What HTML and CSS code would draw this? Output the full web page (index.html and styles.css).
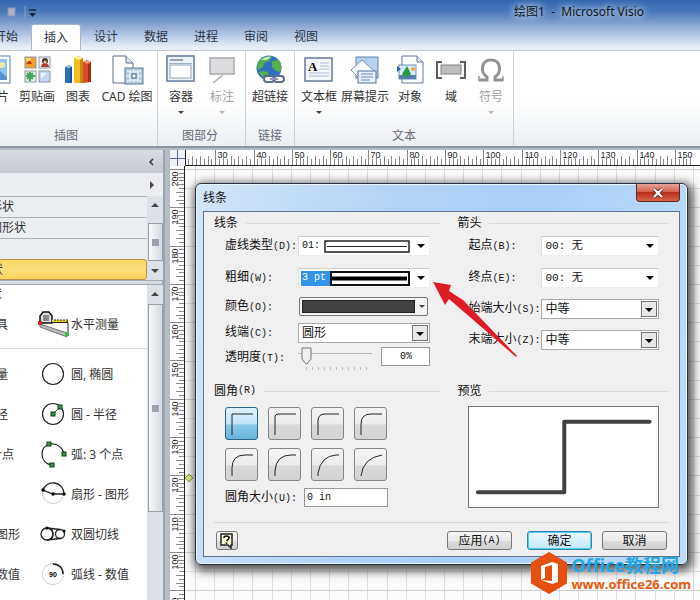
FILE: index.html
```html
<!DOCTYPE html>
<html lang="zh-CN">
<head>
  <meta charset="UTF-8">
  <meta name="viewport" content="width=device-width, initial-scale=1.0">
  <title>绘图1 - Microsoft Visio</title>
  <link rel="stylesheet" href="styles.css">
</head>
<body>
  <header class="topbar">
    <div class="titlebar">
      <svg class="quick" width="40" height="20" viewBox="0 0 40 20">
        <path d="M8 6h7v8H8z" fill="#a8b4c6" stroke="#8492a8"/>
        <path d="M25 4v13" stroke="#8da3c4"/>
        <path d="M29 8h7" stroke="#1d2733" stroke-width="1.5"/>
        <path d="M29 11h7l-3.500 4z" fill="#1d2733"/>
      </svg>
      <span class="title">绘图1&nbsp; -&nbsp; Microsoft Visio</span>
    </div>
    <nav class="tabs">
      <button class="tab">开始</button>
      <button class="tab active">插入</button>
      <button class="tab">设计</button>
      <button class="tab">数据</button>
      <button class="tab">进程</button>
      <button class="tab">审阅</button>
      <button class="tab">视图</button>
    </nav>
  </header>

  <section class="ribbon">
    <div class="group group-pics">
      <div class="tools">
        <button class="tool tool-pic">
          <svg width="30" height="30" viewBox="0 0 30 30"><rect x="1" y="1" width="27" height="27" fill="#fff" stroke="#5f7fa5"/><rect x="4" y="4" width="21" height="21" fill="#8fc3ee"/><circle cx="20" cy="10" r="3" fill="#f2e6b0"/><path d="M4 25l10-12 11 9v3z" fill="#4f8fd0"/></svg>
          <span>片</span>
        </button>
        <button class="tool">
          <svg width="30" height="30" viewBox="0 0 30 30"><rect x="3" y="2" width="11" height="11" fill="#f6a02a" stroke="#8a95a8"/><path d="M4 9l6 0-2-4z" fill="#c8371c"/><path d="M4 3h5v3H4z" fill="#ffd668"/><rect x="17" y="2" width="11" height="11" fill="#f5f1ee" stroke="#8a95a8"/><circle cx="23" cy="6" r="3" fill="#553126"/><path d="M19 12c0-5 8-5 8 0z" fill="#b33a2e"/><circle cx="23" cy="7" r="1.500" fill="#f3c9a6"/><rect x="3" y="16" width="11" height="11" fill="#e6f3e0" stroke="#8a95a8"/><path d="M8 17v9M4 21h9M5 18l6 6M11 18l-6 6" stroke="#45a45a" stroke-width="2"/><rect x="17" y="16" width="11" height="11" fill="#c8d3fa" stroke="#8a95a8"/><path d="M19 18h5l-5 6z" fill="#f3f6ff"/></svg>
          <span>剪贴画</span>
        </button>
        <button class="tool tool-chart">
          <svg width="30" height="30" viewBox="0 0 30 30"><path d="M2 12l4-2 3 2v16H2z" fill="#2d6fb5"/><path d="M2 12l4-2 3 2-3 1z" fill="#8ec4f0"/><path d="M7 13l2-1v16l-2-1z" fill="#1f4f89"/><path d="M11 3l4-2 5 2v25h-9z" fill="#f0bd24"/><path d="M11 3l4-2 5 2-4 2z" fill="#fff08a"/><path d="M17 5l3-2v25h-3z" fill="#c78a0a"/><path d="M20 7l4-2 4 2v20l-8 1z" fill="#d84a2a"/><path d="M20 7l4-2 4 2-3 2z" fill="#f59a7c"/><path d="M25 9l3-2v20h-3z" fill="#a32b17"/></svg>
          <span>图表</span>
        </button>
        <button class="tool tool-cad">
          <svg width="34" height="30" viewBox="0 0 34 30"><path d="M3 1h13l7 7v20H3z" fill="#fff" stroke="#5c6c82"/><path d="M16 1v7h7" fill="#dce6f2" stroke="#5c6c82"/><rect x="15" y="13" width="18" height="16" fill="#b5cbe0" stroke="#5f7b99"/><path d="M24 14v14M16 21h16M17 16h4M27 16h4M17 26h4M27 26h4" stroke="#f3f8fc" fill="none"/><rect x="20" y="17" width="8" height="8" fill="#a4bdd6" stroke="#fff"/><rect x="22" y="19" width="4" height="4" fill="#eaf2fa" stroke="#55708e"/></svg>
          <span>CAD 绘图</span>
        </button>
      </div>
      <div class="group-name">插图</div>
    </div>
    <div class="group group-parts">
      <div class="tools">
        <button class="tool tool-wide">
          <svg width="30" height="30" viewBox="0 0 30 30"><rect x="1" y="1" width="27" height="25" fill="#eef3f9" stroke="#62799c" stroke-width="1.500"/><path d="M4 5h13" stroke="#3b5273"/><path d="M3 8.500h23" stroke="#9cb0ca"/><rect x="4" y="10" width="21" height="13" fill="#fff" stroke="#8fa5c2"/></svg>
          <span>容器</span><i class="caret"></i>
        </button>
        <button class="tool tool-slim" disabled>
          <svg width="30" height="30" viewBox="0 0 30 30"><rect x="3" y="3" width="24" height="16" fill="#dcdcde" stroke="#aaa8ae" stroke-width="1.500"/><path d="M16 20L6 28" stroke="#b9a9b2" stroke-width="1.500"/></svg>
          <span>标注</span><i class="caret"></i>
        </button>
      </div>
      <div class="group-name">图部分</div>
    </div>
    <div class="group group-link">
      <div class="tools">
        <button class="tool tool-link">
          <svg width="32" height="30" viewBox="0 0 32 30"><circle cx="15" cy="13" r="12.500" fill="#2e71bf"/><path d="M4 8C8 1 15 0 18 2l-3 4-5 2-1 4-5 3-1-4zM18 6l7-1c3 4 3 8 1 12l-4-1-4-4zM8 16l6 1 1 6-4 1c-3-2-5-5-6-7z" fill="#55b04b"/><path d="M7 5c3-3 8-4 10-3l-4 3z" fill="#c5ebc0"/><rect x="10" y="21" width="10" height="6" rx="3" fill="#fff" stroke="#596b92" stroke-width="2"/><rect x="20" y="21" width="10" height="6" rx="3" fill="#fff" stroke="#596b92" stroke-width="2"/><path d="M16 24h8" stroke="#8796b8" stroke-width="2"/></svg>
          <span>超链接</span>
        </button>
      </div>
      <div class="group-name">链接</div>
    </div>
    <div class="group group-text">
      <div class="tools">
        <button class="tool tool-text">
          <svg width="30" height="30" viewBox="0 0 30 30"><rect x="1" y="3" width="27" height="23" fill="#f3f7fc" stroke="#637a9c" stroke-width="1.500"/><text x="4" y="16" class="glyph-a">A</text><path d="M16 8h9M16 11h9M16 14h9M5 18h20M5 21h20" stroke="#a9b9d6"/></svg>
          <span>文本框</span><i class="caret"></i>
        </button>
        <button class="tool tool-text">
          <svg width="30" height="30" viewBox="0 0 30 30"><rect x="6" y="2" width="22" height="21" fill="#b7cff0" stroke="#6482ae"/><path d="M1 15L12 5l12 11-12 10z" fill="#f8fbff" stroke="#8396b4"/><rect x="8" y="16" width="18" height="12" fill="#e8effa" stroke="#5472a1"/><path d="M11 19h12M11 22h12M11 25h9" stroke="#6c8fc5"/></svg>
          <span>屏幕提示</span>
        </button>
        <button class="tool tool-wide">
          <svg width="30" height="30" viewBox="0 0 30 30"><path d="M7 1h15l6 6v21H7z" fill="#fff" stroke="#62799c"/><path d="M22 1v6h6" fill="#dbe6f4" stroke="#62799c"/><rect x="4" y="10" width="17" height="14" fill="#d6edfb" stroke="#6e8eb3"/><circle cx="18" cy="14" r="2" fill="#f2a43a"/><path d="M4 20h17v4H4z" fill="#557db3"/><path d="M12 11l4 8-3 3h-3l-3-3z" fill="#2f9444"/><path d="M2 11l4 3-4 3z" fill="#2a62a5"/></svg>
          <span>对象</span>
        </button>
        <button class="tool tool-slim">
          <svg width="30" height="30" viewBox="0 0 30 30"><path d="M6 7H1v16h5M24 7h5v16h-5" fill="none" stroke="#5d5d5d" stroke-width="2"/><rect x="5" y="10" width="20" height="9" fill="#bdbdbd" stroke="#828282"/></svg>
          <span>域</span>
        </button>
        <button class="tool tool-chart" disabled>
          <svg width="30" height="30" viewBox="0 0 30 30"><path d="M3 25h8v-3C4 17 5 5 15 5s11 12 4 17v3h8" fill="none" stroke="#929292" stroke-width="3"/><path d="M3 21v5M27 21v5" stroke="#929292" stroke-width="1.500"/></svg>
          <span>符号</span><i class="caret"></i>
        </button>
      </div>
      <div class="group-name">文本</div>
    </div>
  </section>

  <main class="workspace">
    <aside class="shapes">
      <div class="shapes-head"><button class="collapse" aria-label="折叠"><svg width="8" height="10" viewBox="0 0 8 10"><path d="M6 2L3 5l3 3" fill="none" stroke="#333" stroke-width="1.500"/></svg></button></div>
      <div class="more"><svg width="6" height="10" viewBox="0 0 6 10"><path d="M1 1l4 4-4 4z" fill="#444"/></svg></div>
      <div class="scroller">
        <div class="stencils">
          <button class="stencil">形状</button>
          <button class="stencil">图形状</button>
          <button class="stencil"></button>
          <button class="stencil selected">状</button>
        </div>
        <div class="bar">
          <svg width="10" height="8" viewBox="0 0 10 8"><path d="M5 2l4 4H1z" fill="#444"/></svg>
          <div class="thumb thumb-top"></div>
          <svg width="10" height="8" viewBox="0 0 10 8"><path d="M5 6l4-4H1z" fill="#444"/></svg>
        </div>
      </div>
      <div class="splitter"></div>
      <div class="scroller scroller-list">
        <div class="masters">
          <div class="masters-name">状</div>
          <div class="master first">
            <span class="cut">具</span>
            <svg width="34" height="30" viewBox="0 0 34 30"><path d="M3 13V6l3-4h6l3 4v7z" fill="#ddd" stroke="#111" stroke-width="1.500"/><path d="M6 6h6M6 8h6M6 10h6" stroke="#333"/><path d="M15 10h16v2H15z" fill="#e7d52c"/><path d="M15 12.500h16M18 9v2M21 9v2M24 9v2M27 9v2M30 9v3" stroke="#222"/><path d="M3 14l27 9v4L3 17z" fill="#bbb" stroke="#777"/><path d="M31 13v13" stroke="#222"/><rect x="1" y="11" width="4" height="4" fill="#d3262c"/><rect x="28" y="22" width="4" height="4" fill="#2fc251"/></svg>
            <span>水平测量</span>
          </div>
          <div class="master">
            <span class="cut">量</span>
            <svg width="34" height="30" viewBox="0 0 34 30"><circle cx="16" cy="14" r="10.500" fill="none" stroke="#222" stroke-width="1.200"/></svg>
            <span>圆, 椭圆</span>
          </div>
          <div class="master">
            <span class="cut">径</span>
            <svg width="34" height="30" viewBox="0 0 34 30"><circle cx="16" cy="14" r="10.500" fill="none" stroke="#222" stroke-width="1.200"/><path d="M16 14l7-7" stroke="#333"/><g fill="#3b9b45" stroke="#123c16"><rect x="14" y="12" width="4" height="4"/><rect x="21" y="5" width="4" height="4"/></g></svg>
            <span>圆 - 半径</span>
          </div>
          <div class="master">
            <span class="cut cut-long">个点</span>
            <svg width="34" height="30" viewBox="0 0 34 30"><path d="M15 25C8 24 5 19 5 14S8 5 14 4s12 4 13 10" fill="none" stroke="#222" stroke-width="1.200"/><g fill="#3b9b45" stroke="#123c16"><rect x="10" y="2" width="4" height="4"/><rect x="25" y="12" width="4" height="4"/><rect x="13" y="23" width="4" height="4"/></g></svg>
            <span>弧: 3 个点</span>
          </div>
          <div class="master">
            <span class="cut"></span>
            <svg width="34" height="30" viewBox="0 0 34 30"><circle cx="16" cy="13" r="10.500" fill="none" stroke="#999" stroke-dasharray="1 1"/><path d="M6 10c3-10 20-10 21 4H16z" fill="none" stroke="#222" stroke-width="1.300"/><circle cx="6" cy="10" r="1.700"/><circle cx="16" cy="14" r="1.700"/><circle cx="27" cy="14" r="1.700"/></svg>
            <span>扇形 - 图形</span>
          </div>
          <div class="master">
            <span class="cut">图形</span>
            <svg width="34" height="30" viewBox="0 0 34 30"><g fill="none" stroke="#222" stroke-width="1.300"><circle cx="10" cy="14" r="6"/><circle cx="23" cy="14" r="4.500"/><path d="M10 8l13 1.500M10 20l13-1.500M10 8c8 1 8 11 0 12"/></g><circle cx="10" cy="8" r="1.500"/><circle cx="27" cy="11" r="1.500"/></svg>
            <span>双圆切线</span>
          </div>
          <div class="master">
            <span class="cut">数值</span>
            <svg width="34" height="30" viewBox="0 0 34 30"><circle cx="16" cy="14" r="10.500" fill="none" stroke="#999" stroke-dasharray="1 1"/><path d="M16 4c6 0 10 4 10 10" fill="none" stroke="#222" stroke-width="1.500"/><text x="12" y="17" class="glyph-deg">90</text></svg>
            <span>弧线 - 数值</span>
          </div>
        </div>
        <div class="bar">
          <svg width="10" height="8" viewBox="0 0 10 8"><path d="M5 2l4 4H1z" fill="#444"/></svg>
          <div class="thumb thumb-list"></div>
        </div>
      </div>
    </aside>

    <section class="page">
      <div class="corner"></div>
      <svg class="ruler-x" id="ruler-x"></svg>
      <svg class="ruler-y" id="ruler-y"></svg>
      <svg class="sheet" id="sheet"></svg>
    </section>
  </main>

  <form class="dialog" onsubmit="return false">
    <div class="dialog-title">
      <h1>线条</h1>
      <button class="close" type="button" aria-label="关闭"><svg width="12" height="10" viewBox="0 0 12 10"><path d="M2 1l8 8M10 1L2 9" stroke="#6b2a24" stroke-width="4"/><path d="M2 1l8 8M10 1L2 9" stroke="#fff" stroke-width="2.200"/></svg></button>
    </div>
    <div class="dialog-body">
      <div class="columns">
        <section>
          <h2>线条</h2>
          <div class="fields fields-line">
            <label for="dash">虚线类型<span class="key">(D):</span></label>
            <div class="combo flat">
              <select id="dash"><option>01:</option></select>
              <svg width="86" height="13" viewBox="0 0 86 13"><rect x="1" y="1" width="84" height="11" fill="#fff" stroke="#222" stroke-width="1.500"/><path d="M3 6.500h80" stroke="#222"/></svg>
            </div>
            <label for="weight">粗细<span class="key">(W):</span></label>
            <div class="combo flat weight">
              <select id="weight"><option>3 pt</option></select>
              <svg width="80" height="15" viewBox="0 0 80 15"><rect x="1" y="1" width="78" height="13" fill="#fff" stroke="#111" stroke-width="2"/><path d="M2 7.500h75" stroke="#000" stroke-width="4"/></svg>
            </div>
            <label for="color">颜色<span class="key">(O):</span></label>
            <button class="color" id="color" type="button"><span class="swatch"></span><i class="caret"></i></button>
            <label for="cap">线端<span class="key">(C):</span></label>
            <div class="combo"><select id="cap"><option>圆形</option></select></div>
            <label for="alpha">透明度<span class="key">(T):</span></label>
            <div class="slider">
              <div class="track"><input id="alpha" type="range" min="0" max="100" value="0"><div class="marks"></div></div>
              <input class="percent" type="text" value="0%" aria-label="透明度">
            </div>
          </div>
        </section>
        <section>
          <h2>箭头</h2>
          <div class="fields fields-arrow">
            <label for="begin">起点<span class="key">(B):</span></label>
            <div class="combo flat"><select id="begin"><option>00: 无</option></select></div>
            <label for="end">终点<span class="key">(E):</span></label>
            <div class="combo flat"><select id="end"><option>00: 无</option></select></div>
            <label for="begin-size">始端大小<span class="key">(S):</span></label>
            <div class="combo"><select id="begin-size"><option>中等</option></select></div>
            <label for="end-size">末端大小<span class="key">(Z):</span></label>
            <div class="combo"><select id="end-size"><option>中等</option></select></div>
          </div>
        </section>
        <section>
          <h2>圆角<span class="key">(R)</span></h2>
          <div class="rounds">
            <button class="round on" type="button" aria-label="圆角 1"><svg width="33" height="33" viewBox="0 0 33 33"><path d="M6 27V6h21"/></svg></button>
            <button class="round" type="button" aria-label="圆角 2"><svg width="33" height="33" viewBox="0 0 33 33"><path d="M6 27V9q0-3 3-3h18"/></svg></button>
            <button class="round" type="button" aria-label="圆角 3"><svg width="33" height="33" viewBox="0 0 33 33"><path d="M6 27V13q0-7 7-7h14"/></svg></button>
            <button class="round" type="button" aria-label="圆角 4"><svg width="33" height="33" viewBox="0 0 33 33"><path d="M6 27V16q0-10 10-10h11"/></svg></button>
            <button class="round" type="button" aria-label="圆角 5"><svg width="33" height="33" viewBox="0 0 33 33"><path d="M6 27v-8Q6 6 19 6h8"/></svg></button>
            <button class="round" type="button" aria-label="圆角 6"><svg width="33" height="33" viewBox="0 0 33 33"><path d="M6 27v-5Q7 6 22 6h5"/></svg></button>
            <button class="round" type="button" aria-label="圆角 7"><svg width="33" height="33" viewBox="0 0 33 33"><path d="M6 27v-3Q9 7 24 6h3"/></svg></button>
            <button class="round" type="button" aria-label="圆角 8"><svg width="33" height="33" viewBox="0 0 33 33"><path d="M6 27Q8 9 27 6"/></svg></button>
          </div>
          <div class="round-size">
            <label for="round-size">圆角大小<span class="key">(U):</span></label>
            <input id="round-size" type="text" value="0 in">
          </div>
        </section>
        <section class="preview-col">
          <h2>预览</h2>
          <svg class="preview" viewBox="0 0 190 101" preserveAspectRatio="none"><path d="M9 86h87V15h86" fill="none" stroke="#404040" stroke-width="4" stroke-linecap="round" stroke-linejoin="round"/></svg>
        </section>
      </div>
      <div class="actions">
        <button class="help" type="button" aria-label="帮助"><svg width="16" height="16" viewBox="0 0 16 16"><path d="M2 1h11v11h-1v3l-3-3H2z" fill="#ffffd8" stroke="#222" stroke-width="1.500"/><path d="M5 5q0-2 2.500-2T10 5q0 1-2.500 3M7.500 9.500v1.500" fill="none" stroke="#111" stroke-width="1.700"/></svg></button>
        <button type="button">应用<span class="key">(A)</span></button>
        <button class="ok" type="submit">确定</button>
        <button type="button">取消</button>
      </div>
    </div>
  </form>

  <svg class="pointer" width="90" height="82" viewBox="0 0 90 82"><path d="M1 1l18 3-2 6 14 9 54 56-1 1L24 24l-7-6-4 6z" fill="#de1c24"/></svg>

  <div class="brand">
    <svg width="36" height="42" viewBox="0 0 36 42"><path d="M18 1l17 10v20L18 41 1 31V11z" fill="#e5500f" stroke="#e5500f" stroke-linejoin="round" stroke-width="2"/><path d="M10 14l11-4 6 2v18l-6 2-11-4 11 1V13l-7 2v11l-4 2z" fill="#fff"/></svg>
    <div>
      <div class="brand-name">Office教程网</div>
      <a class="brand-url" href="#">www.office26.com</a>
    </div>
  </div>

  <script>
const STEP = 38.3; // pixels per 10 units

function line(x1, y1, x2, y2, color) {
  return `<line x1="${x1}" y1="${y1}" x2="${x2}" y2="${y2}" stroke="${color}"/>`;
}

function drawRulerX() {
  let out = "";
  for (let i = 0; i < 135; i++) {
    const x = Math.round(-9 + i * STEP / 10) + 0.5;
    const top = i % 10 === 0 ? 0 : i % 2 === 0 ? 6 : 9;
    out += line(x, top, x, 15, "#888");
    if (i % 10 === 0 && i > 0) {
      out += `<text x="${x + 2}" y="8">${20 + i}</text>`;
    }
  }
  document.getElementById("ruler-x").innerHTML = out;
}

function drawRulerY() {
  let out = "";
  for (let i = 0; i < 120; i++) {
    const y = Math.round(3 + i * STEP / 10) + 0.5;
    const left = i % 10 === 0 ? 0 : i % 2 === 0 ? 6 : 9;
    out += line(left, y, 14, y, "#888");
    if (i % 10 === 0) {
      out += `<text transform="translate(8 ${y + 17}) rotate(-90)">${200 - i}</text>`;
    }
  }
  document.getElementById("ruler-y").innerHTML = out;
}

function drawSheet() {
  let out = "";
  for (let i = 0; i < 30; i++) {
    const x = Math.round(10 + i * STEP / 2) + 0.5;
    const y = Math.round(3 + i * STEP / 2) + 0.5;
    out += line(x, 0, x, 600, "#dcdde2");
    out += line(0, y, 700, y, i % 2 ? "#dcdde2" : "#cfd0d6");
  }
  out += `<path d="M4 308l4 4-4 4-4-4z" fill="#dde87a" stroke="#8d9a34"/>`;
  document.getElementById("sheet").innerHTML = out;
}

drawRulerX();
drawRulerY();
drawSheet();
  </script>
</body>
</html>
```

FILE: styles.css
```css
* {
  box-sizing: border-box;
}

body {
  margin: 0;
  height: 100vh;
  overflow: hidden;
  position: relative;
  display: flex;
  flex-direction: column;
  background: #b4bcc6;
  color: #333;
  font-family: "Noto Sans", "Noto Sans CJK SC", sans-serif;
  font-size: 12px;
  line-height: 14px;
}

button,
input,
select {
  font: inherit;
  color: inherit;
  margin: 0;
  padding: 0;
  border: none;
  background: none;
}

svg {
  display: block;
  flex: none;
}

/* title and tabs */
.topbar {
  background: linear-gradient(#3266ae, #4b7abb 12px, #9db7db 30px, #e4eaf4 46px, #edf1f7);
}

.titlebar {
  height: 24px;
  display: flex;
  align-items: center;
  justify-content: space-between;
  padding-right: 56px;
}

.title {
  color: #101820;
  text-shadow: 0 0 6px #d5e2f3, 0 0 10px #d5e2f3;
}

.tabs {
  display: flex;
  height: 26px;
  margin-left: -19px;
}

.tab {
  width: 50px;
  color: #2a3444;
}

.tab.active {
  background: #fff;
  border: 1px solid #a9b6c8;
  border-bottom: none;
  border-radius: 3px 3px 0 0;
}

/* ribbon */
.ribbon {
  display: flex;
  height: 98px;
  background: linear-gradient(#fff 50%, #eceff2);
  border-top: 1px solid #c3cad3;
  border-bottom: 2px solid #8d959f;
}

.group {
  display: flex;
  flex-direction: column;
  justify-content: space-between;
  padding: 4px 1px 3px;
  border-right: 1px solid #cdd1d6;
}

.group-pics {
  margin-left: -25px;
  padding-right: 2px;
  padding-left: 2px;
}

.group-parts {
  padding-right: 4px;
}

.tools {
  display: flex;
}

.tool {
  width: 40px;
  display: flex;
  flex-direction: column;
  align-items: center;
  gap: 5px;
  white-space: nowrap;
}

.tool-slim {
  width: 38px;
}

.tool-chart {
  width: 42px;
}

.tool-wide {
  width: 44px;
}

.tool-text,
.tool-link {
  width: 46px;
}

.tool-cad {
  width: 56px;
}

.tool-pic span {
  padding-left: 12px;
}

.tool:disabled {
  color: #a0a0a0;
}

.caret {
  border: 3px solid transparent;
  border-top-color: #444;
  border-bottom: none;
}

.tool:disabled .caret {
  border-top-color: #bbb;
}

.tool .caret {
  margin-top: 2px;
}

.group-name {
  text-align: center;
  color: #666d77;
}

.glyph-a {
  font: bold 13px "Liberation Serif", serif;
}

.glyph-deg {
  font: bold 7px "Liberation Sans", sans-serif;
}

/* shapes pane */
.workspace {
  flex: 1;
  min-height: 0;
  display: flex;
  padding-top: 2px;
}

.shapes {
  width: 185px;
  margin: 0 5px 0 -20px;
  display: flex;
  flex-direction: column;
  background: #ebedf1;
  border-right: 2px solid #9aa3ae;
}

.shapes-head,
.more {
  height: 23px;
  display: flex;
  align-items: center;
  justify-content: flex-end;
  padding-right: 8px;
}

.shapes-head {
  background: linear-gradient(#d9dce1, #c6cad0);
}

.scroller {
  display: flex;
}

.scroller-list {
  flex: 1;
  min-height: 0;
}

.stencils {
  flex: 1;
}

.stencil {
  display: block;
  width: 100%;
  height: 21px;
  padding-left: 10px;
  text-align: left;
  border-top: 1px solid #aab1bb;
}

.stencil.selected {
  background: linear-gradient(#fbd864, #fcdf7c 50%, #fbd25a);
  border: 1px solid #b8924a;
  border-radius: 3px;
}

.bar {
  width: 16px;
  display: flex;
  flex-direction: column;
  align-items: center;
  gap: 6px;
  padding: 5px 0;
  background: #dce1e7;
}

.thumb {
  width: 15px;
  background: linear-gradient(#9ba3ae, #9ba3ae) center / 7px 7px no-repeat, linear-gradient(90deg, #f7f8fa, #d5dae1);
  border: 1px solid #98a0ab;
}

.thumb-top {
  flex: 1;
  margin: 8px 0 0;
}

.thumb-list {
  height: 208px;
}

.splitter {
  height: 5px;
  background: #d6dbe2;
  border: 1px solid #a1a9b4;
}

.masters {
  flex: 1;
  padding-top: 2px;
  background: #fff;
  overflow: hidden;
}

.masters-name {
  padding-left: 10px;
}

.master {
  height: 40px;
  display: flex;
  align-items: center;
  white-space: nowrap;
}

.master.first {
  height: 48px;
  margin-bottom: 6px;
  border-bottom: 1px solid #ddd;
}

.cut {
  width: 57px;
  padding-left: 16px;
}

.cut-long {
  padding-left: 10px;
}

/* drawing page */
.page {
  flex: 1;
  min-width: 0;
  display: grid;
  grid-template-columns: 15px 1fr;
  grid-template-rows: 16px 1fr;
  background: #fff;
}

.corner {
  background: linear-gradient(#669, #669) center / 1px 100% no-repeat, linear-gradient(#669, #669) center / 100% 1px no-repeat, #eef1f8;
}

.ruler-x,
.ruler-y,
.sheet {
  width: 100%;
  height: 100%;
  overflow: hidden;
  font: 9px "Liberation Sans", sans-serif;
  fill: #222;
}

.ruler-x {
  border-bottom: 1px solid #222;
  border-left: 1px solid #222;
}

.ruler-y {
  border-right: 1px solid #222;
}

.sheet {
  background: #fbfbfc;
}

/* dialog */
.dialog {
  position: absolute;
  left: 195px;
  top: 183px;
  width: 493px;
  padding: 0 7px 7px;
  background: linear-gradient(100deg, #d4e5f7, #b3d4f8 35%, #a9cff8 60%, #bcdcfa);
  border: 1px solid #26313f;
  border-radius: 6px;
  box-shadow: inset 0 0 0 1px #e9f4ff, 2px 3px 10px 3px #555;
  color: #111;
}

.dialog-title {
  height: 27px;
  display: flex;
  justify-content: space-between;
}

.dialog h1 {
  margin: 7px 0 0;
  font-size: 12px;
  font-weight: normal;
}

.close {
  width: 44px;
  height: 18px;
  display: grid;
  place-items: center;
  background: linear-gradient(#e6a395, #d4634f 45%, #b92d1c 50%, #d9644c);
  border: 1px solid #5d2623;
  border-top: none;
  border-radius: 0 0 4px 4px;
}

.dialog-body {
  padding: 4px 10px 6px;
  background: #f0f0f0;
  border: 1px solid #5f738c;
}

.columns {
  display: grid;
  grid-template-columns: 227fr 212fr;
  column-gap: 17px;
  row-gap: 14px;
}

.dialog h2 {
  display: flex;
  align-items: center;
  height: 14px;
  margin: 0;
  font-size: 12px;
  font-weight: normal;
}

.dialog h2::after {
  content: "";
  flex: 1;
  margin-left: 8px;
  border-top: 1px solid #dcdcdc;
}

.key {
  font-family: "Liberation Mono", monospace;
  font-size: 10px;
}

.fields {
  display: grid;
  grid-template-columns: 73px 1fr;
  align-items: center;
  padding: 0 10px 0 11px;
  white-space: nowrap;
}

.fields-line {
  grid-template-rows: 32px 32px 25px 27px 24px;
}

.fields-arrow {
  grid-template-rows: 32px 32px 30px 31px;
}

.combo {
  display: grid;
  align-items: center;
  justify-items: end;
}

.combo select,
.combo svg {
  grid-area: 1 / 1;
}

.combo svg {
  margin-right: 20px;
  pointer-events: none;
}

.combo select {
  appearance: none;
  width: 100%;
  height: 20px;
  padding-left: 3px;
  border: 1px solid #aaa;
  background: #fff url("data:image/svg+xml,%3Csvg xmlns='http://www.w3.org/2000/svg' width='17' height='16'%3E%3Crect x='.5' y='.5' width='15' height='15' fill='%23e8e8e8' stroke='%23777'/%3E%3Cpath d='M4 7h8l-4 4z'/%3E%3C/svg%3E") right center no-repeat;
}

.combo.flat select {
  border-color: #ccc #eee #eee #ddd;
  background-image: url("data:image/svg+xml,%3Csvg xmlns='http://www.w3.org/2000/svg' width='13' height='16'%3E%3Cpath d='M1 6h8l-4 4z'/%3E%3C/svg%3E");
  font-family: "Liberation Mono", "Noto Sans CJK SC", monospace;
  font-size: 10px;
}

.combo.weight select {
  color: #fff;
  background-image: linear-gradient(#3393e8, #3393e8), url("data:image/svg+xml,%3Csvg xmlns='http://www.w3.org/2000/svg' width='13' height='16'%3E%3Cpath d='M1 6h8l-4 4z'/%3E%3C/svg%3E");
  background-size: 30px 15px, 13px 16px;
  background-position: 2px center, right center;
}

.fields-arrow .flat select {
  font-size: 11px;
}

.color {
  height: 19px;
  margin: 0 2px 0 1px;
  padding: 2px;
  display: flex;
  align-items: center;
  gap: 4px;
  border: 1px solid #777;
  border-radius: 2px;
  background: #f4f4f4;
}

.swatch {
  flex: 1;
  align-self: stretch;
  background: #424242;
  border: 1px solid #222;
}

.slider {
  display: flex;
  gap: 9px;
}

.track {
  flex: 1;
}

.track input {
  appearance: none;
  display: block;
  width: 100%;
  height: 18px;
  background: linear-gradient(#bbb, #bbb) center 6px / 100% 1px no-repeat;
}

.track input::-webkit-slider-thumb {
  appearance: none;
  width: 16px;
  height: 18px;
  background: url("data:image/svg+xml,%3Csvg xmlns='http://www.w3.org/2000/svg' width='16' height='18'%3E%3Cpath d='M4 1h9v11l-4 5h-1l-4-5z' fill='%23eee' stroke='%23777'/%3E%3C/svg%3E");
}

.marks {
  height: 3px;
  margin: 2px 2px 0 8px;
  background: repeating-linear-gradient(90deg, #bbb 0 1px, transparent 1px 6px);
}

.percent {
  width: 49px;
  height: 19px;
  text-align: center;
}

.percent,
.round-size input {
  background: #fff;
  border: 1px solid #999;
  font-family: "Liberation Mono", monospace;
  font-size: 10px;
}

.rounds {
  display: grid;
  grid-template-columns: repeat(4, 33px);
  gap: 8px 10px;
  padding: 9px 0 0 11px;
}

.round {
  height: 33px;
  border-radius: 3px;
  border: 1px solid #858585;
  background: linear-gradient(#f4f4f4, #ececec 50%, #d9d9d9 55%, #d3d3d3);
  display: grid;
  place-items: center;
}

.round svg {
  fill: none;
  stroke: #222;
}

.round.on {
  border-color: #2c6488;
  background: linear-gradient(#dff2fc, #c2e5f8 50%, #88c9ea 55%, #6ab3dc);
}

.round-size {
  display: flex;
  align-items: center;
  gap: 7px;
  padding: 7px 0 0 11px;
}

.round-size input {
  width: 84px;
  height: 19px;
  padding-left: 2px;
}

.preview-col {
  display: flex;
  flex-direction: column;
}

.preview {
  width: auto;
  height: 102px;
  margin: 8px 10px 0 11px;
  background: #fff;
  border: 1px solid #777;
}

.actions {
  display: flex;
  justify-content: flex-end;
  gap: 10px;
  margin-top: 14px;
  padding: 8px 2px 0;
  border-top: 1px solid #d8d8d8;
}

.actions button {
  width: 65px;
  height: 19px;
  display: flex;
  align-items: center;
  justify-content: center;
  border: 1px solid #777;
  border-radius: 3px;
  background: linear-gradient(#f4f4f4, #ebebeb 50%, #dcdcdc 55%, #d0d0d0);
}

.actions .help {
  width: 22px;
  margin-right: auto;
}

.actions .ok {
  margin-left: 5px;
  border-color: #3c7fb1;
  background: linear-gradient(#eaf8fe, #c3e9fa);
  box-shadow: inset 0 0 0 1px #46d0f2;
}

/* overlays */
.pointer {
  position: absolute;
  left: 432px;
  top: 281px;
}

.brand {
  position: absolute;
  right: 9px;
  bottom: 6px;
  display: flex;
  align-items: center;
  gap: 4px;
}

.brand-name {
  color: #27a5e3;
  font: bold 18px/22px "Open Sans", "Noto Sans CJK SC", sans-serif;
}

.brand-url {
  display: block;
  color: #e8590c;
  font: bold 13px/16px "Open Sans", sans-serif;
  text-decoration: none;
}
```
